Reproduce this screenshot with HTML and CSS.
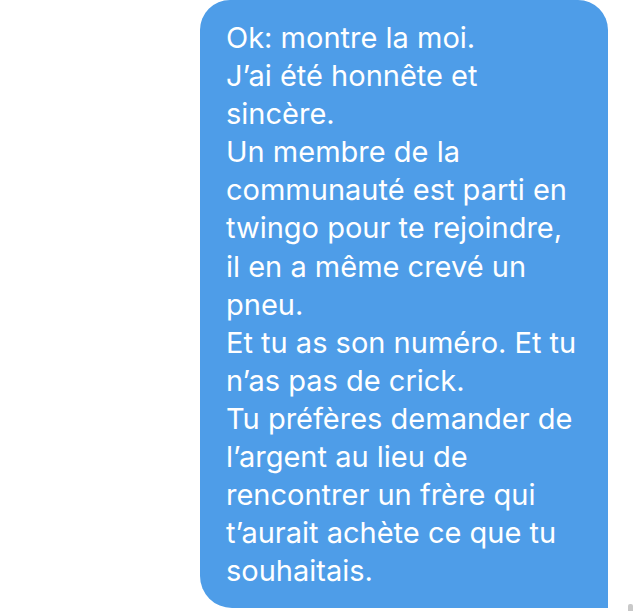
FILE: index.html
```html
<!DOCTYPE html>
<html lang="fr">
<head>
<meta charset="utf-8">
<link rel="stylesheet" href="styles.css">
</head>
<body>
<div class="thread">
  <div class="bubble">
    <p class="msg">
      <span class="line">Ok: montre la moi.</span>
      <span class="line">J’ai été honnête et</span>
      <span class="line">sincère.</span>
      <span class="line">Un membre de la</span>
      <span class="line">communauté est parti en</span>
      <span class="line">twingo pour te rejoindre,</span>
      <span class="line">il en a même crevé un</span>
      <span class="line">pneu.</span>
      <span class="line">Et tu as son numéro. Et tu</span>
      <span class="line">n’as pas de crick.</span>
      <span class="line">Tu préfères demander de</span>
      <span class="line">l’argent au lieu de</span>
      <span class="line">rencontrer un frère qui</span>
      <span class="line">t’aurait achète ce que tu</span>
      <span class="line">souhaitais.</span>
    </p>
  </div>
  <span class="edge-mark"></span>
</div>
</body>
</html>
```
FILE: styles.css
```css
html, body {
  margin: 0;
  padding: 0;
  background: #ffffff;
}
.thread {
  position: relative;
  width: 640px;
  height: 611px;
  display: flex;
  justify-content: flex-end;
  align-items: flex-start;
  padding-right: 32px;
  box-sizing: border-box;
}
.bubble {
  width: 408px;
  box-sizing: border-box;
  background: #4e9de8;
  border-radius: 30px 30px 0 32px;
  padding: 19px 6px 18px 26px;
}
.msg {
  margin: 0;
  color: #ffffff;
  font-family: Inter, "Liberation Sans", sans-serif;
  font-size: 29px;
  line-height: 38.1px;
  letter-spacing: 0;
}
.line {
  display: block;
  white-space: nowrap;
}
.edge-mark {
  position: absolute;
  left: 628px;
  top: 604px;
  width: 5px;
  height: 8px;
  border-radius: 2px 2px 0 0;
  background: #c9c9c9;
}
```
